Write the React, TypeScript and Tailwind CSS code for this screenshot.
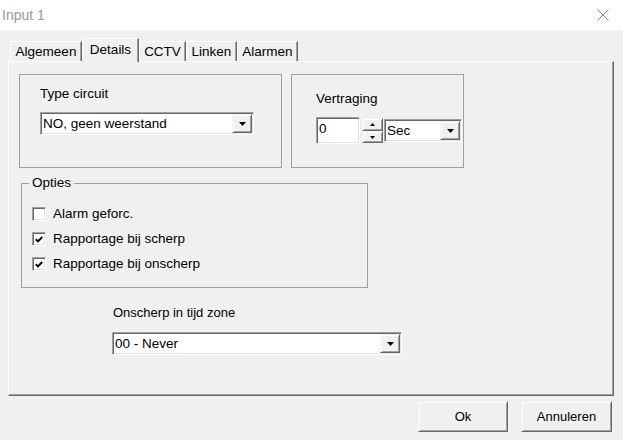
import type { ReactNode } from 'react';

// classic 3D edges
const SUNKEN =
  'border border-t-[#a0a0a0] border-l-[#a0a0a0] border-r-white border-b-white shadow-[inset_1px_1px_0_#696969,inset_-1px_-1px_0_#e3e3e3]';
const RAISED =
  'border border-t-[#f0f0f0] border-l-[#f0f0f0] border-r-[#696969] border-b-[#696969] shadow-[inset_1px_1px_0_#ffffff,inset_-1px_-1px_0_#a0a0a0] bg-[#f0f0f0]';

const TABS = [
  { label: 'Algemeen', width: 'w-[72px]' },
  { label: 'Details', width: 'w-[57px]' },
  { label: 'CCTV', width: 'w-[47px]' },
  { label: 'Linken', width: 'w-[51px]' },
  { label: 'Alarmen', width: 'w-[61px]' },
];

const OPTIONS = [
  { label: 'Alarm geforc.', checked: false },
  { label: 'Rapportage bij scherp', checked: true },
  { label: 'Rapportage bij onscherp', checked: true },
];

function DownArrow() {
  return (
    <svg width="7" height="4" viewBox="0 0 7 4">
      <polygon points="0,0 7,0 3.5,4" fill="#000" />
    </svg>
  );
}

function Combo({ text, className }: { text: string; className: string }) {
  return (
    <div className={`${SUNKEN} ${className} bg-white p-[1px] flex`}>
      <span className="flex-1 pl-[1px] leading-[19px] whitespace-nowrap overflow-hidden">{text}</span>
      <span className={`${RAISED} w-[20px] h-[19px] flex items-center justify-center`}>
        <DownArrow />
      </span>
    </div>
  );
}

function Checkbox({ checked }: { checked: boolean }) {
  return (
    <span className={`${SUNKEN} w-[14px] h-[14px] bg-white flex items-center justify-center shrink-0`}>
      {checked && (
        <svg width="8" height="7" viewBox="0 0 8 7">
          <polyline points="0.8,3.2 3,5.4 7.2,1" fill="none" stroke="#000" strokeWidth="2" />
        </svg>
      )}
    </span>
  );
}

function Button({ children }: { children: ReactNode }) {
  return (
    <button className={`${RAISED} h-[31px] text-[13px] leading-[16px] flex items-center justify-center`}>
      {children}
    </button>
  );
}

export default function App() {
  return (
    <div className="w-[623px] h-[440px] bg-[#f0f0f0] text-black font-['Liberation_Sans',Arial,sans-serif] text-[13.5px] overflow-hidden">
      {/* title bar */}
      <div className="h-[30px] bg-white flex items-center justify-between pl-[2px] pr-[14px]">
        <span className="text-[14px] leading-[30px] text-[#999999]">Input 1</span>
        <svg width="12" height="12" viewBox="0 0 12 12">
          <path d="M0.5 0.5 L11.5 11.5 M11.5 0.5 L0.5 11.5" stroke="#8a8a8a" strokeWidth="1" />
        </svg>
      </div>

      <div className="pl-[8px] pt-[8px]">
        {/* tabs */}
        <div className="flex items-end pl-[2px]">
          {TABS.map(t =>
            t.label === 'Details' ? (
              <div
                key={t.label}
                className={`${t.width} h-[24px] -mb-px relative z-10 bg-[#f0f0f0] border-t border-l border-r border-t-white border-l-white border-r-[#696969] shadow-[inset_-1px_0_0_#a0a0a0] pt-[3px] text-center leading-[16px]`}
              >
                {t.label}
              </div>
            ) : (
              <div
                key={t.label}
                className={`${t.width} h-[20px] border-t border-l border-r border-t-white border-l-white border-r-[#696969] shadow-[inset_-1px_0_0_#a0a0a0] pt-[2px] text-center leading-[16px]`}
              >
                {t.label}
              </div>
            )
          )}
        </div>

        {/* tab panel */}
        <div className="w-[606px] h-[335px] border border-t-white border-l-white border-r-[#696969] border-b-[#696969] shadow-[inset_-1px_-1px_0_#a0a0a0] pl-[10px] pt-[12px] flex flex-col items-start">
          <div className="flex gap-[9px]">
            <div className="w-[263px] h-[94px] border border-[#a0a0a0] pl-[20px] pt-[11px]">
              <div className="leading-[16px]">Type circuit</div>
              <Combo text="NO, geen weerstand" className="mt-[10px] w-[214px] h-[23px]" />
            </div>
            <div className="w-[173px] h-[94px] border border-[#a0a0a0] pl-[24px] pt-[16px]">
              <div className="leading-[16px]">Vertraging</div>
              <div className="mt-[10px] flex items-center">
                <div className={`${SUNKEN} w-[44px] h-[27px] bg-white p-[1px]`}>
                  <div className="pl-[1px] pt-[2px] leading-[16px]">0</div>
                </div>
                <div className="ml-[2px] w-[21px] h-[25px] flex flex-col">
                  <span className={`${RAISED} h-[13px] flex items-center justify-center`}>
                    <svg width="5" height="3" viewBox="0 0 5 3">
                      <polygon points="0,3 5,3 2.5,0" fill="#000" />
                    </svg>
                  </span>
                  <span className={`${RAISED} h-[12px] flex items-center justify-center`}>
                    <svg width="5" height="3" viewBox="0 0 5 3">
                      <polygon points="0,0 5,0 2.5,3" fill="#000" />
                    </svg>
                  </span>
                </div>
                <Combo text="Sec" className="ml-[1px] w-[78px] h-[23px]" />
              </div>
            </div>
          </div>

          <fieldset className="ml-[2px] mt-[7px] w-[347px] h-[113px] border border-[#a0a0a0]">
            <legend className="ml-[7px] px-[3px] leading-[16px]">Opties</legend>
            <div className="pl-[10px] pt-[15px] flex flex-col gap-[9px]">
              {OPTIONS.map(o => (
                <label key={o.label} className="h-[16px] flex items-center gap-[7px] leading-[16px]">
                  <Checkbox checked={o.checked} />
                  {o.label}
                </label>
              ))}
            </div>
          </fieldset>

          <div className="ml-[94px] mt-[17px] text-[13px] leading-[16px]">Onscherp in tijd zone</div>
          <Combo text="00 - Never" className="ml-[93px] mt-[11px] w-[290px] h-[23px]" />
        </div>
      </div>

      {/* dialog buttons */}
      <div className="mt-[5px] pr-[11px] flex justify-end gap-[13px]">
        <div className="w-[90px] flex flex-col">
          <Button>Ok</Button>
        </div>
        <div className="w-[91px] flex flex-col">
          <Button>Annuleren</Button>
        </div>
      </div>
    </div>
  );
}
